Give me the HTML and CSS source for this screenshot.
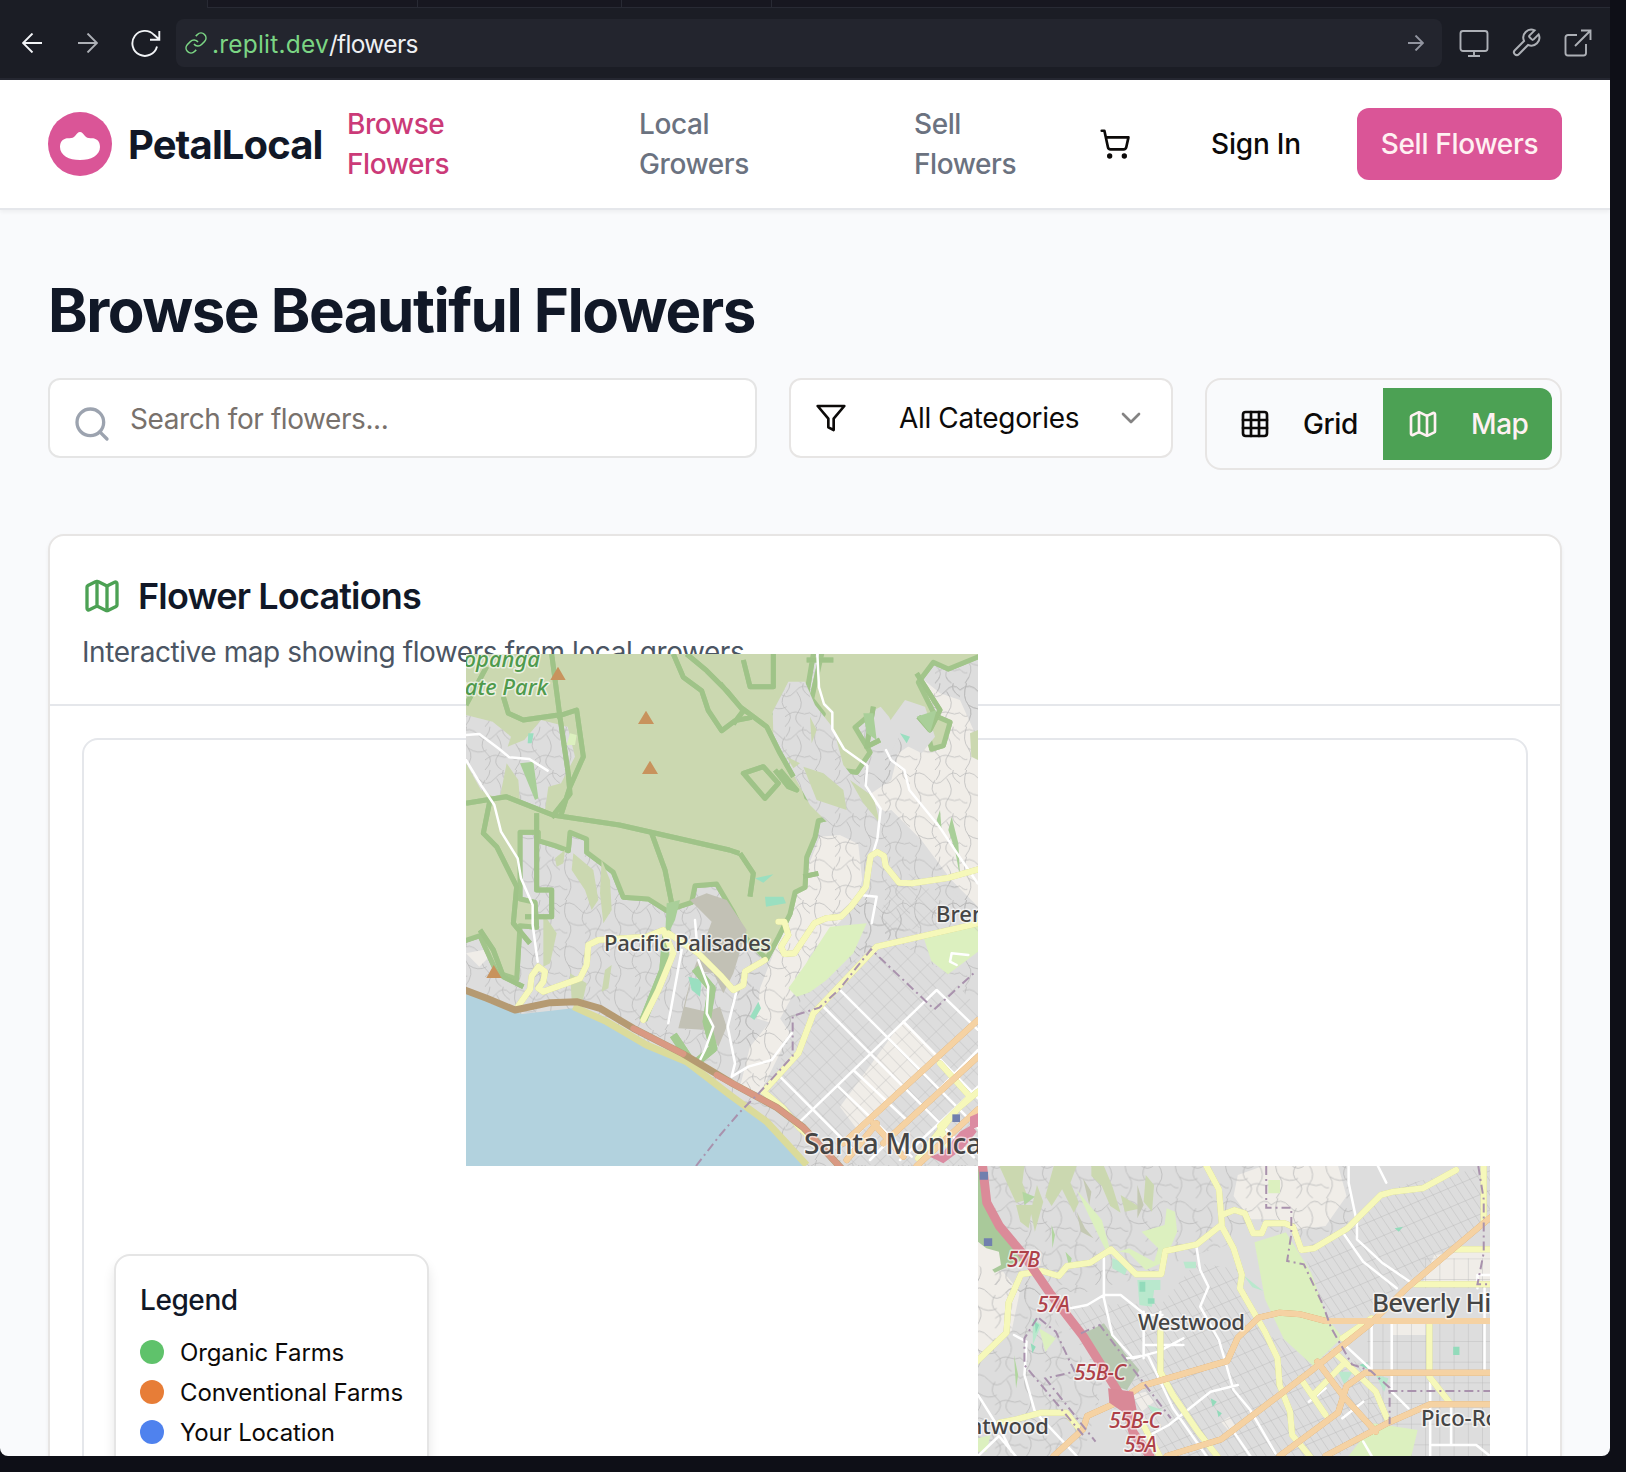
FILE: index.html
```html
<!DOCTYPE html>
<html lang="en">
<head>
<meta charset="utf-8">
<title>PetalLocal - Browse Flowers</title>
<link rel="stylesheet" href="styles.css">
</head>
<body>
<div class="chrome">
  <div class="tabs"><span class="tab tab-active"></span><span class="tab tab-b"></span><span class="tab tab-c"></span><span class="tab tab-d"></span><span class="tab tab-rest"></span></div>
  <div class="toolbar">
    <svg class="ic back" viewBox="0 0 20 20"><path d="M20 10H1M10.500 0.500L1 10l9.500 9.500"/></svg>
    <svg class="ic forward dim" viewBox="0 0 20 20"><path d="M0 10h19M9.500 0.500L19 10l-9.500 9.500"/></svg>
    <svg class="ic reload" viewBox="0 0 30 28"><path d="M26 17.500A12.500 12.500 0 1 1 23 5.800L28.300 10.500M28.300 2v8.800h-9.300"/></svg>
    <div class="url">
      <svg class="ic link" viewBox="0 0 24 24"><path d="M10 13a5 5 0 0 0 7.540.540l3-3a5 5 0 0 0-7.070-7.070l-1.720 1.710"/><path d="M14 11a5 5 0 0 0-7.540-.540l-3 3a5 5 0 0 0 7.070 7.070l1.710-1.710"/></svg>
      <span class="address"><b>.replit.dev</b>/flowers</span>
      <svg class="ic go" viewBox="0 0 16 16"><path d="M0 8h15M7.500 0.500L15 8l-7.500 7.500"/></svg>
    </div>
    <svg class="ic monitor dim" viewBox="0 0 30 28"><rect x="1.500" y="2" width="27" height="20" rx="2.500"/><path d="M15 22v5M9 27h12"/></svg>
    <svg class="ic wrench dim" viewBox="0 0 24 24"><path d="M14.700 6.300a1 1 0 0 0 0 1.400l1.600 1.600a1 1 0 0 0 1.400 0l3.770-3.770a6 6 0 0 1-7.940 7.940l-6.910 6.910a2.120 2.120 0 0 1-3-3l6.910-6.910a6 6 0 0 1 7.940-7.940l-3.760 3.760z"/></svg>
    <svg class="ic external dim" viewBox="0 0 28 28"><path d="M13 6H4a2.500 2.500 0 0 0-2.500 2.500V24A2.500 2.500 0 0 0 4 26.500h15.500A2.500 2.500 0 0 0 22 24v-9M17 1.500h9.500V11M26.500 1.500L11 17"/></svg>
  </div>
</div>

<div class="preview">
  <header class="site-header">
    <div class="brand">
      <svg class="logo" viewBox="0 0 64 64"><circle cx="32" cy="32" r="32" fill="#da5597"/><path fill="#fff" d="M12 35C12 28.500 16 26 21 26.200c3 .1 4.500-.7 6-2.200 1.700-2 3-4 5-4s3.300 2 5 4c1.500 1.500 3 2.300 6 2.200 5-.2 9 2.300 9 8.800 0 8.500-9 13-20 13s-20-4.500-20-13z"/></svg>
      <span class="brand-name">PetalLocal</span>
    </div>
    <nav class="links">
      <a class="link-browse">Browse<br>Flowers</a>
      <a class="link-growers">Local<br>Growers</a>
      <a class="link-sell">Sell<br>Flowers</a>
    </nav>
    <svg class="lucide cart" viewBox="0 0 24 24"><circle cx="8" cy="21" r="1"/><circle cx="19" cy="21" r="1"/><path d="M2.050 2.050h2l2.660 12.420a2 2 0 0 0 2 1.580h9.780a2 2 0 0 0 1.950-1.570l1.650-7.430H5.120"/></svg>
    <a class="sign-in">Sign In</a>
    <a class="sell-button">Sell Flowers</a>
  </header>

  <main>
    <h1>Browse Beautiful Flowers</h1>
    <div class="controls">
      <div class="search">
        <svg class="lucide" viewBox="0 0 24 24"><circle cx="11" cy="11" r="8"/><path d="m21 21-4.300-4.300"/></svg>
        <span>Search for flowers...</span>
      </div>
      <div class="select">
        <svg class="lucide" viewBox="0 0 24 24"><path d="M22 3H2l8 9.460V19l4 2v-8.540z"/></svg>
        <span>All Categories</span>
        <svg class="lucide chevron" viewBox="0 0 24 24"><path d="m6 9 6 6 6-6"/></svg>
      </div>
      <div class="toggle">
        <div class="mode"><svg class="lucide" viewBox="0 0 24 24"><rect x="3" y="3" width="18" height="18" rx="2"/><path d="M3 9h18M3 15h18M9 3v18M15 3v18"/></svg><span>Grid</span></div>
        <div class="mode mode-on"><svg class="lucide" viewBox="0 0 24 24"><path d="M14.106 5.553a2 2 0 0 0 1.788 0l3.659-1.830A1 1 0 0 1 21 4.619v12.764a1 1 0 0 1-.553.894l-4.553 2.277a2 2 0 0 1-1.788 0l-4.212-2.106a2 2 0 0 0-1.788 0l-3.659 1.830A1 1 0 0 1 3 19.381V6.618a1 1 0 0 1 .553-.894l4.553-2.277a2 2 0 0 1 1.788 0z"/><path d="M15 5.764v15M9 3.236v15"/></svg><span>Map</span></div>
      </div>
    </div>

    <section class="card">
      <div class="card-head">
        <h2><svg class="lucide title-icon" viewBox="0 0 24 24"><path d="M14.106 5.553a2 2 0 0 0 1.788 0l3.659-1.830A1 1 0 0 1 21 4.619v12.764a1 1 0 0 1-.553.894l-4.553 2.277a2 2 0 0 1-1.788 0l-4.212-2.106a2 2 0 0 0-1.788 0l-3.659 1.830A1 1 0 0 1 3 19.381V6.618a1 1 0 0 1 .553-.894l4.553-2.277a2 2 0 0 1 1.788 0z"/><path d="M15 5.764v15M9 3.236v15"/></svg>Flower Locations</h2>
        <p>Interactive map showing flowers from local growers</p>
      </div>
      <div class="card-body">
        <div class="map">
          <svg class="tile tile-coast" viewBox="18 42 1536 1536">
            <defs>
              <pattern id="wind" width="150" height="130" patternUnits="userSpaceOnUse"><path class="minor" d="M0 20q30-25 55 5t50 0 45-5M20 0q-15 40 5 65t-10 65M75 30q-20 30 5 50t-5 50M110 25q25 35 5 60t10 45M25 65q30 20 55 5M75 100q25-20 42-12t33 0M0 88q12 14 22 10M130 0q-10 20 20 40M90 0q0 15-12 30"/></pattern>
              <pattern id="grid" width="30" height="54" patternUnits="userSpaceOnUse" patternTransform="rotate(-44)"><path class="minor" d="M0 0h30M0 0v54"/></pattern>
            </defs>
            <path fill="#dddddd" d="M0 0h1600v1600H0z"/><path fill="url(#wind)" d="M0 0h1600v1600H0z"/>
            <!-- hillside quarters east of the park -->
            <path class="cream" d="M1380 110l60 50 60 20 54 120v500l-80-80-90-120-90-90-40 10-20-60 60-40 20-80 60-40 40-90zM1080 590l60-5 60 30 20 60-30 100-30 50-60 60-50 60-40 100-60 110-60-20 10-90 50-130 60-150 40-100zM870 1220l80-100 40 60-90 180-60-20zM18 940l100-20-60 60z"/>
            <path fill="url(#wind)" d="M1250 110h304v690l-200 50-360 400-160 150V1000l200-400 220-50z"/>
            <path class="housing" d="M1180 480l60 10 100 70 100 130 60 90-140 50-120-20-30-60z"/>
            <path fill="url(#wind)" d="M1180 480l60 10 100 70 100 130 60 90-140 50-120-20-30-60z"/>
            <!-- parkland -->
            <path class="park park-edge" d="M0 20H1060v22l-20 120-60-10-35 70 45 100 30 80 20 70 80 60-45 10-10 50-25 60-5 90-30 15-15 65-35 70-35 65-60-60-40-80-50-85-65 5-10 50-75 25-55-35-75-5-30-75-80-60v-40l-50-20-5 55-40-15-50-15v-25h-55v200l45 10 5 75-50-5-10 160-60-20-50-110-60 20L0 950z"/>
            <path class="park park-edge" d="M1085 42V20h490v22l-110 45-45-20-45 60 50 100 45 20-20 70-35 10-20-80-60-20-10 60-65-20-40-35-35 30 45 75-40 60-75-10-30-50-40-50 45-65-35-45z"/>
            <path class="housing" d="M1335 180l60 20 30 90-40 50-60-30-40-60z"/>
            <path class="housing" d="M1232 215l30-15 25 30 30 60-30 60-50-50z"/>
            <path class="housing" d="M18 225l80 20 55 45-10 30 50-20 50-60 80 20 22 90-42 80-38 10-10 70-75-25-5-65-35-50-22 110-55-30-45-80z"/>
            <path fill="url(#wind)" d="M18 225l80 20 55 45-10 30 50-20 50-60 80 20 22 90-42 80-38 10-10 70-75-25-5-65-35-50-22 110-55-30-45-80z"/>
            <path class="housing" d="M985 125h50l30 70 55 70 30 110 80 100 30 80-10 60-110-30-90-90-60-110-50-100-2-70z"/>
            <path fill="url(#wind)" d="M985 125h50l30 70 55 70 30 110 80 100 30 80-10 60-110-30-90-90-60-110-50-100-2-70z"/>
            <path class="park" d="M1030 380l60 20 60 50 10 60-90-30zM1170 420l70 50 20 80-50-60zM330 1000l50 30-20 90-25-40zM250 820l40 60-20 90-20 10zM340 640l60 50 15 90-20 30-20-60-40-60zM425 660l25 60 5 90-25 40-10-90zM435 990l20-15-10 70-20 10zM285 655l30-25-5 40-20 10zM1530 280l24-10v90l-20-10zM980 350l40 20-20 15zM1050 230l20 40-15 40z"/>
            <g class="edge"><path d="M275 42l25 190 25 170 5 60-55 70M290 230l60-20 20 140-40 90-30 95M130 170l15 50 45 20 105-15M18 490l120-20 140 55 200 30 330 75 30 10M80 80L18 195M640 42l30 70 55 40 20 60 40 60 40-30 50-10M680 42l60 50 60 60 50 60-30 40M780 130l60 70 80 60 40 80 40 70M850 60l20 80h70V42M575 580l40 110 20 100M90 480l-20 100 40 40 60 120-10 110 50 60M230 520v230h45v80h-80M60 870l40 60 30 80 60 30M850 400l60-20 45 50-40 45-60-70zM960 390l50 60-25-10-40-50M840 640l40 60-10 70M1075 700l-45 10M1370 100l70 110-30 60-35-40M1240 200l-20 120 40-20M1040 60h80"/></g>
            <path fill="#a9cf99" d="M180 370l40-5 15 110-10 5zM1210 220l30 0 10 80-30-20zM1370 230l60-20-20 70zM620 790l40-10-15 60-30 60zM1475 530l20 80 5 100-15-80-20-60zM1430 540l10-30 5 60z"/>
            <path fill="#c2c1b5" d="M690 780l50-20 60 20 60 90-40 130-30 60-30-60-60-10-25 110 65 15 40-15 20 60-25 60-30-50-90-5 40-160 60-160z"/>
            <path class="golf" d="M1110 860l110-10-40 90-110 110-60 20-25-25 50-70zM1390 890l164-45v90l-90 68-50-40zM330 280l20 5-5 30h-25z"/>
            <path fill="#9adfc0" d="M915 770h55l8 20-60 10zM885 715l55-12-30 25zM205 280h16l-6 30h-12zM685 1010l40 10-5 50-25-20zM1320 280l30 10-10 20zM870 1130l25-45 8 20-20 35zM1295 1290l20-10 5 10-15 12zM1490 1155l15-5 10 15-12 8zM1470 1460l24-10 6 20-20 10z"/>
            <path class="edge-soft" d="M620 870l-10 120-60 150M705 985l50 60-15 100 20 80-60 50-60-90"/>
            <!-- street grid -->
            <path class="housing" d="M1260 905l40-10 165 110 89 100v470h-370l-270-220 60-120 50-160z"/>
            <path class="cream" d="M1330 1140l110 110-240 230-60-80z"/>
            <path fill="url(#grid)" d="M1260 905l40-10 165 110 89 100v470h-370l-270-220 60-120 50-160zM1310 690l60 20 184 180v-60l-260 50-40-40z"/>
            <!-- ocean -->
            <path class="water" d="M0 1045l18 7 70 38 97 32 155-17 90 40 110 65 140 60 130 100 110 80 110 120v20H0z"/>
            <path class="beach" d="M340 1100l100 45 120 70 120 50 130 100 110 80 120 130"/>
            <g class="road w"><path d="M18 285l40-3 60 45 30 25 60 5 55 35M18 360l45 75 40 60 20 80 50 80 10 60 35 80 0 60 15 110M1072 42l5 100 15 50 25 25 0 50 35 60 70 50-5 60 45 70-10 90-15 50M1278 330l15 30 40 30 15 60 90 110 60 90 55 80M1200 765l50 5-15 80M665 930l-40 220M705 840l5 60M715 960l30 80-5 80 20 40-25 70-20 40M828 1060l-25 100 22 110-10 40 50-30 70-20 60-80M1525 945l-50-5-5 25 20 10"/>
            <path d="M1020 1445l410-395 124 120M1082 1092l460 460M1135 1045l440 440M1330 1145l224 230M1180 1290l160 150M1135 1340l220 210M960 1310l220 220M1230 1560l324-330M1320 1560l234-220M1470 1540l84-90"/></g>
            <g class="road y"><path d="M175 1098l35-50 5-40 20-28 20 15-5 30-15 20 15 10 110-40 20-40 5-60 30-15 145-10 50-20 30 70-45 110-45 90M625 880l90 60 70 70 35 40 30-15 5-40 60-35M955 845l18 0 12 40-22 35 10 22 30-2 60-90 35-15 45-5 30-30 45-60 7-50 7-42 20-12 20 12 5 30 40 50 40 2 110-17 100-28 30-20M910 1355l105-115 45-120 190-200 304-70M910 1355l60 50 50 60 90 80M1440 1270l90 100-90 90 30 70M1554 1355l-60 50-120 150"/></g>
            <g class="road o"><path d="M1150 1510l404-370M1270 1510l284-260M1240 1450l90 100M1160 1560l90-110M1370 1578l184-170"/></g>
            <g class="road hw"><path d="M0 1045l80 30 85 35 105-22 80-3 70 20 100 60 150 77 150 90 130 70 80 60 130 140"/><path class="hw-main" d="M520 1165l150 77M770 1305l180 97 80 60 130 140"/></g>
            <path fill="#db8ba2" d="M1410 1550l40-15 50-60 35-20 15 20-40 50-60 45zM1530 1430l24-10v40l-24 10z"/>
            <path class="admin" d="M708 1578l70-90 60-70 60-60 100-110 0-120 80-25 60-55 95-120 190 180 120-110"/>
            <path class="peak" d="M294 80l23 40h-46zM558 212l24 40h-48zM570 362l24 40h-48zM101 975l24 39H79z"/>
            <path fill="#7180ae" d="M1477 1423h23v23h-23z"/>
          </svg>
          <svg class="tile-labels labels-coast" viewBox="466 654 512 512">
            <g class="place-park" text-anchor="end"><text x="540" y="667">Topanga</text><text x="548" y="695">State Park</text></g>
            <text class="place" x="604" y="951" textLength="167">Pacific Palisades</text>
            <text class="place" x="936" y="922">Brentwood</text>
            <text class="place place-big" x="804" y="1154" textLength="178">Santa Monica</text>
          </svg>

          <svg class="tile tile-city" viewBox="19 33 1224 870" preserveAspectRatio="none">
            <defs>
              <pattern id="blocks" width="34" height="62" patternUnits="userSpaceOnUse"><path class="minor" d="M0 0h34M0 0v62"/></pattern>
              <pattern id="slant" width="20" height="52" patternUnits="userSpaceOnUse" patternTransform="rotate(-28)"><path class="minor" d="M0 0h20M0 0v52"/></pattern>
              <pattern id="curvy" width="120" height="130" patternUnits="userSpaceOnUse"><path class="minor" d="M0 20q24-25 44 5t40 0 36-5M16 0q-12 40 4 65t-8 65M60 30q-16 30 4 50t-4 50M88 25q20 35 4 60t8 45M20 65q24 20 44 5M60 100q20-20 34-12t26 0M0 88q10 14 18 10"/></pattern>
            </defs>
            <path fill="#dddddd" d="M0 0h1260v920H0z"/>
            <path class="cream" d="M640 60l60-27h180l20 90-50 90-60 10-60-30-60 0-40-70zM19 310l60 40 40 60-20 120-80 90zM1110 300l133-20v100h-160zM1010 500h80v40h-80zM390 720l30-10 20 30-30 30zM600 800l20-15 15 30-15 15z"/>
            <path fill="url(#curvy)" d="M19 33h880l20 180-120 80-110-100-80 80-80 30-200 100-200 30-110-50z"/><path fill="url(#curvy)" d="M19 370l140 10 60 150 100 160-50 213H19z"/>
            <path fill="url(#slant)" d="M210 470l120 230 50 203h500l130-100-80-180-120-60-110-20-60-200-100-20-80 120-240 10zM800 290l110-90 120-110 213-57v170l-220 190-70 90-110 10z"/>
            <path fill="url(#blocks)" d="M950 500h293v403h-293zM1080 310h163v90h-163z"/>
            <path class="park" d="M70 33h60l-5 50 15 50-30 10-15-40zM200 33h55l-15 50 20 60-12 30-28-70-25 50-15-30zM290 33l30 0 20 60 20 80-25-20-20-60-25-30zM360 120l50 40-40 10zM420 60l20 30-5 80-20-30zM110 150l40 0-10 70-20-20zM160 90l15 50-20 90-10-60z"/>
            <path fill="#c4c9b3" d="M255 170l20 50 20 30-30-20zM400 90l15 60-15 40zM270 70l20 40-5 40z"/>
            <path fill="#b2d6a0" d="M125 110l30 15-25 25zM195 210l8 30-6 40zM228 290l15 20-5 30zM105 600l10 60-5 40z"/>
            <path fill="#a9c99a" d="M19 33l30 150 70 110 10 20-70 40-40-60z"/>
            <path class="cream" d="M19 260l20 20 30 10 5 40-30 20-25-20z"/>
            <path class="golf" d="M680 262l75-30 60 120 40 140 35 55-70 85-70-80-45-120zM255 105l60 90 20 90 45 10 40 50 45-25 30-90-5-60-20-10-5 50-55 20 40 50-10 40-60-40-50 20-35-90zM713 75h28v40h-28zM965 805l105 20-15 78H905zM19 850l30-10-10 50H19zM165 520l40 30-25 40z"/>
            <path fill="#b8c8b1" d="M265 540l55-35 50 90 35 50-30 60-35-15z"/>
            <path fill="#b9e8cd" d="M400 375h55v30h-15l-5 50-30-5zM340 310l40 20-10 30-30-20zM655 362l45 45-25-10zM510 320h30v20h-25zM880 650l35 0-20 40zM970 660l30 10-10 40zM150 490l20 20-20 60zM425 750l35 15-20 15z"/>
            <path fill="#93dbbb" d="M1155 575h15v25h-15zM575 730l15 10-10 15zM405 380h14v30h-14zM425 430h16v16h-16zM145 565l12 10-8 20zM155 500l10 10-8 25zM1015 220l20-5-10 15zM590 765l12 10-8 12zM930 630l20-8v20z"/>
            <g class="road w"><path d="M905 33l0 50 20 120 0 50 60 70 70 60M975 33l20 50M890 230l50 90 80 80M320 310v120l20 110 50 70 60-20 60-40M240 460l40-10 40-30h40l60 60h40M540 265l10 80 20 50-20 60 45 100 35 150 40 60 60 130M105 540l30 20-5 100 25 110 100 133M19 720l60 120 20 50M415 850l60-40 100-100 65-20M375 610l50-10 60 160 80 143M415 470v140M455 470v120M415 570h95M960 500v145l-60-70M1008 500v210l40 50M1230 400v250M1100 650v253M1150 750v120h-45M1110 870h100l30 30M1010 430h90M630 830l40 73M19 903l50-60 40 60M940 740l-50 50M850 700l-40 40M1243 360h-30v40M940 860l20 43"/></g>
            <g class="road y"><path d="M565 33l30 70 7 105-60 60-75 20-10 70h-60l-60-75-50 40-55 10-20 30-40-15-50 10-30 85-5 90-90 110M602 180l30-15 25 10 20 60 20 0 10-30 45 0 20 10 20 70 30-5 80-60 80-100 30-10 70-10 80-55M600 210l30 70 20 80-5 40 60 130 30 80 5 80 25 80 5 70 55 83M455 530v120l30 70 60 110 50 80M70 803l40-10 60-20 60 0 35 55M870 590l50 60 50 60 30 90M790 670l60 110M820 720l70-90M890 550l70-60M1098 500v165l50 80M1243 283h-90M1243 388h-180M1228 33v170M410 800l50 120"/></g>
            <g class="road o"><path d="M200 903l70-80 10-40 70-40 60-50 205-75 25-70 50-60 50-15 50 5 60 20h393M470 903l130-50 210-200 145-145 90-110 198-210M830 620l60 100 80 110M740 903l140-130 20-80 45-40h298M850 903l150-100 100-55h143"/></g>
            <path class="road freeway" d="M30 33l10 110 30 70 60 90 60 110 80 130 70 140 30 60 20 90 40 70"/>
            <path fill="#d98997" d="M330 700l60 10 8 55-30 8-35-30z"/>
            <path class="admin" d="M708 33v125h60v80l-10 80 40 10 45 120 20 70 50 110 45 20 45 50v110M1215 33l13 100v160l-15 95h30M1000 708h243M265 535l45-25 60 100 110 180M165 490l40 40 45 120-70 20 120 190M160 490l-30 60 0 80 80 120 60 90"/>
            <path fill="#7180ae" d="M23 50h20v24H23zM33 250h20v23H33z"/>
          </svg>
          <svg class="tile-labels labels-city" viewBox="978 1166 512 290">
            <text class="place" x="1138" y="1330" textLength="107">Westwood</text>
            <text class="place place-mid" x="1372" y="1312" textLength="144">Beverly Hills</text>
            <text class="place" x="1421" y="1426">Pico-Robertson</text>
            <text class="place" x="1049" y="1434" text-anchor="end">Brentwood</text>
            <g class="exit"><text x="1007" y="1267" textLength="33">57B</text><text x="1037" y="1312" textLength="33">57A</text><text x="1074" y="1380" textLength="52">55B-C</text><text x="1109" y="1428" textLength="52">55B-C</text><text x="1124" y="1452" textLength="33">55A</text></g>
          </svg>

          <div class="legend">
            <h3>Legend</h3>
            <div class="entry"><i class="dot organic"></i><span>Organic Farms</span></div>
            <div class="entry"><i class="dot conventional"></i><span>Conventional Farms</span></div>
            <div class="entry"><i class="dot you"></i><span>Your Location</span></div>
          </div>
        </div>
      </div>
    </section>
  </main>
</div>
</body>
</html>
```
FILE: styles.css
```css
* { box-sizing: border-box; }
body { margin: 0; width: 1626px; height: 1472px; overflow: hidden; background: #0e0f17; font-family: Inter, "Liberation Sans", sans-serif; font-size: 28px; line-height: 40px; letter-spacing: -0.420px; color: #0c0a09; }
h1, h2, h3, p { margin: 0; }
svg { display: block; flex: none; }

.chrome { width: 1610px; height: 80px; background: #1b1d25; border-bottom: 2px solid #252731; }
.tabs { display: flex; height: 8px; }
.tab { background: #171720; border-bottom: 1px solid #282a34; border-left: 1px solid #282a34; }
.tab-active { width: 207px; background: none; border: 0; }
.tab-b { width: 210px; }
.tab-c { width: 204px; }
.tab-d { width: 150px; }
.tab-rest { flex: 1; }
.toolbar { display: flex; align-items: center; height: 70px; padding-left: 22px; }
.ic { fill: none; stroke: #f2f4f7; stroke-width: 1.900; }
.dim { stroke: #adb0b6; }
.back { width: 20px; height: 20px; margin-right: 36px; }
.forward { width: 20px; height: 20px; margin-right: 33px; }
.reload { width: 30px; height: 28px; margin-right: 15px; }
.url { display: flex; align-items: center; width: 1266px; height: 48px; padding: 0 18px 0 8px; border-radius: 8px; background: #23252e; }
.link { width: 24px; height: 24px; stroke: #7bd584; stroke-width: 1.600; margin-right: 4px; }
.address { flex: 1; padding-top: 2px; font-size: 24.500px; letter-spacing: -0.650px; color: #eef0f3; }
.address b { font-weight: 400; color: #7bd584; letter-spacing: .2px; }
.go { width: 16px; height: 16px; stroke: #9295a0; }
.monitor { width: 30px; height: 28px; margin: 0 21px 0 17px; }
.wrench { width: 32px; height: 32px; stroke-width: 1.500; margin-right: 22px; }
.external { width: 28px; height: 28px; }

.preview { width: 1610px; height: 1376px; overflow: hidden; border-radius: 0 0 8px 8px; background: #f9fafc; }
.site-header { position: relative; display: flex; align-items: center; height: 130px; padding: 0 48px; background: #fff; border-bottom: 2px solid #e5e7eb; box-shadow: 0 2px 4px rgba(0,0,0,.05); }
.brand { display: flex; align-items: center; gap: 16px; width: 299px; }
.logo { width: 64px; height: 64px; }
.brand-name { padding-top: 1px; font-size: 40px; font-weight: 700; letter-spacing: -0.900px; color: #111827; }
.links { display: flex; width: 752px; font-weight: 500; color: #6b7280; }
.link-browse { width: 292px; color: #cb3a78; }
.link-growers { width: 275px; }
.lucide { width: 32px; height: 32px; fill: none; stroke: currentColor; stroke-width: 2; stroke-linecap: round; stroke-linejoin: round; }
.cart { margin-right: 80px; }
.sign-in { font-weight: 500; width: 146px; letter-spacing: -0.200px; }
.sell-button { width: 205px; height: 72px; border-radius: 12px; background: #da5597; color: #fff1f2; font-weight: 500; line-height: 72px; letter-spacing: -0.300px; text-align: center; }

main { padding: 64px 48px 0; }
h1 { padding-top: 1px; font-size: 60px; line-height: 71px; font-weight: 700; letter-spacing: -1.500px; color: #111827; white-space: nowrap; }
.controls { display: flex; align-items: flex-start; margin-top: 32px; }
.search { display: flex; align-items: center; gap: 18px; width: 709px; height: 80px; margin-right: 32px; padding-left: 22px; border: 2px solid #e5e5e5; border-radius: 12px; background: #fff; color: #78716c; }
.search svg { width: 40px; height: 40px; color: #9ca3af; margin-top: 12px; }
.search span { padding-top: 2px; }
.select { display: flex; align-items: center; width: 384px; height: 80px; margin-right: 32px; padding: 0 24px; border: 2px solid #e7e5e4; border-radius: 12px; background: #fff; }
.select span { flex: 1; padding-left: 52px; letter-spacing: -0.350px; }
.chevron { opacity: .5; }
.toggle { display: flex; width: 357px; height: 92px; padding: 8px; border: 2px solid #e7e5e4; border-radius: 16px; }
.mode { display: flex; align-items: center; gap: 32px; width: 168px; height: 72px; padding-left: 24px; font-weight: 500; }
.mode-on { width: 169px; border-radius: 0 12px 12px 0; background: #4ca154; color: #fff1f2; }

.card { width: 1514px; height: 1100px; margin-top: 64px; border: 2px solid #e7e5e4; border-radius: 16px; background: #fff; box-shadow: 0 2px 4px rgba(0,0,0,.05); }
.card-head { height: 170px; padding: 32px; border-bottom: 2px solid #e5e7eb; }
h2 { display: flex; align-items: center; gap: 16px; font-size: 36px; line-height: 56px; font-weight: 600; letter-spacing: -0.850px; color: #111827; }
h2 .title-icon { width: 40px; height: 40px; color: #4ca154; }
.card-head p { margin-top: 8px; color: #4b5563; letter-spacing: -0.430px; white-space: nowrap; }
.card-body { padding: 32px; }
.map { position: relative; width: 1446px; height: 800px; border: 2px solid #e5e7eb; border-radius: 16px; }
.tile, .tile-labels { position: absolute; overflow: hidden; }
.tile-coast, .labels-coast { left: 382px; top: -86px; width: 512px; height: 512px; }
.tile-city, .labels-city { left: 894px; top: 426px; width: 512px; height: 290px; }
.legend { position: absolute; left: 30px; top: 514px; width: 315px; height: 260px; padding: 24px; border: 2px solid #e5e5e5; border-radius: 16px; background: #fff; box-shadow: 0 8px 12px rgba(0,0,0,.1); }
.legend h3 { margin-bottom: 12px; font-size: 28px; line-height: 40px; font-weight: 500; color: #111827; }
.entry { display: flex; align-items: center; gap: 16px; height: 40px; font-size: 24px; letter-spacing: -0.130px; white-space: nowrap; }
.entry span { padding-top: 2px; }
.dot { flex: none; width: 24px; height: 24px; border-radius: 50%; }
.organic { background: #5fc26b; }
.conventional { background: #e77d37; }
.you { background: #4f82ee; }

.tile path { vector-effect: non-scaling-stroke; }
.minor { fill: none; stroke: #b9b9b9; stroke-width: 1; }
.tile pattern path { stroke-width: 2.200; vector-effect: none; }
.park { fill: #cbd8b0; }
.park-edge { stroke: #a2c58b; stroke-width: 5; stroke-linejoin: round; filter: drop-shadow(0 0 2px #a8c991); }
.edge, .edge-soft { fill: none; stroke: #9fc388; stroke-width: 5; stroke-linejoin: round; filter: drop-shadow(0 0 2px #a8c991); }
.edge-soft { stroke-width: 8; stroke: #a4cb91; }
.housing { fill: #dddddd; }
.cream { fill: #f0ede8; }
.golf { fill: #dcf0bf; }
.water { fill: #b2d2de; }
.beach { fill: none; stroke: #dbdb9b; stroke-width: 7; }
.road path, path.road { fill: none; stroke-linejoin: round; stroke-linecap: round; }
.w path { stroke: #fff; stroke-width: 2.500; }
.y { filter: drop-shadow(0 0 1px #c9ce86); }
.y path { stroke: #f6f8ba; stroke-width: 6; }
.o { filter: drop-shadow(0 0 1px #d09b5a); }
.o path { stroke: #f5d2a3; stroke-width: 6; }
.hw path { stroke: #b59a72; stroke-width: 7; }
.hw .hw-main { stroke: #d99983; stroke-width: 6; }
.freeway { stroke: #db8b99; stroke-width: 9; }
.admin { fill: none; stroke: #a992ad; stroke-width: 2; stroke-dasharray: 9 4 2 4; }
.peak { fill: #c8935d; }
.tile-labels text { font-family: "Noto Sans", sans-serif; letter-spacing: 0; font-weight: 500; paint-order: stroke; stroke: rgba(255,255,255,.65); stroke-width: 3px; stroke-linejoin: round; }
.place { font-size: 22px; fill: #454545; }
.tile-labels .place-mid { font-size: 26px; }
.tile-labels .place-big { font-size: 28px; }
.place-park { font-size: 22px; font-style: italic; fill: #4f9a4c; }
.exit { font-size: 21px; font-style: italic; fill: #ae4149; }
```
